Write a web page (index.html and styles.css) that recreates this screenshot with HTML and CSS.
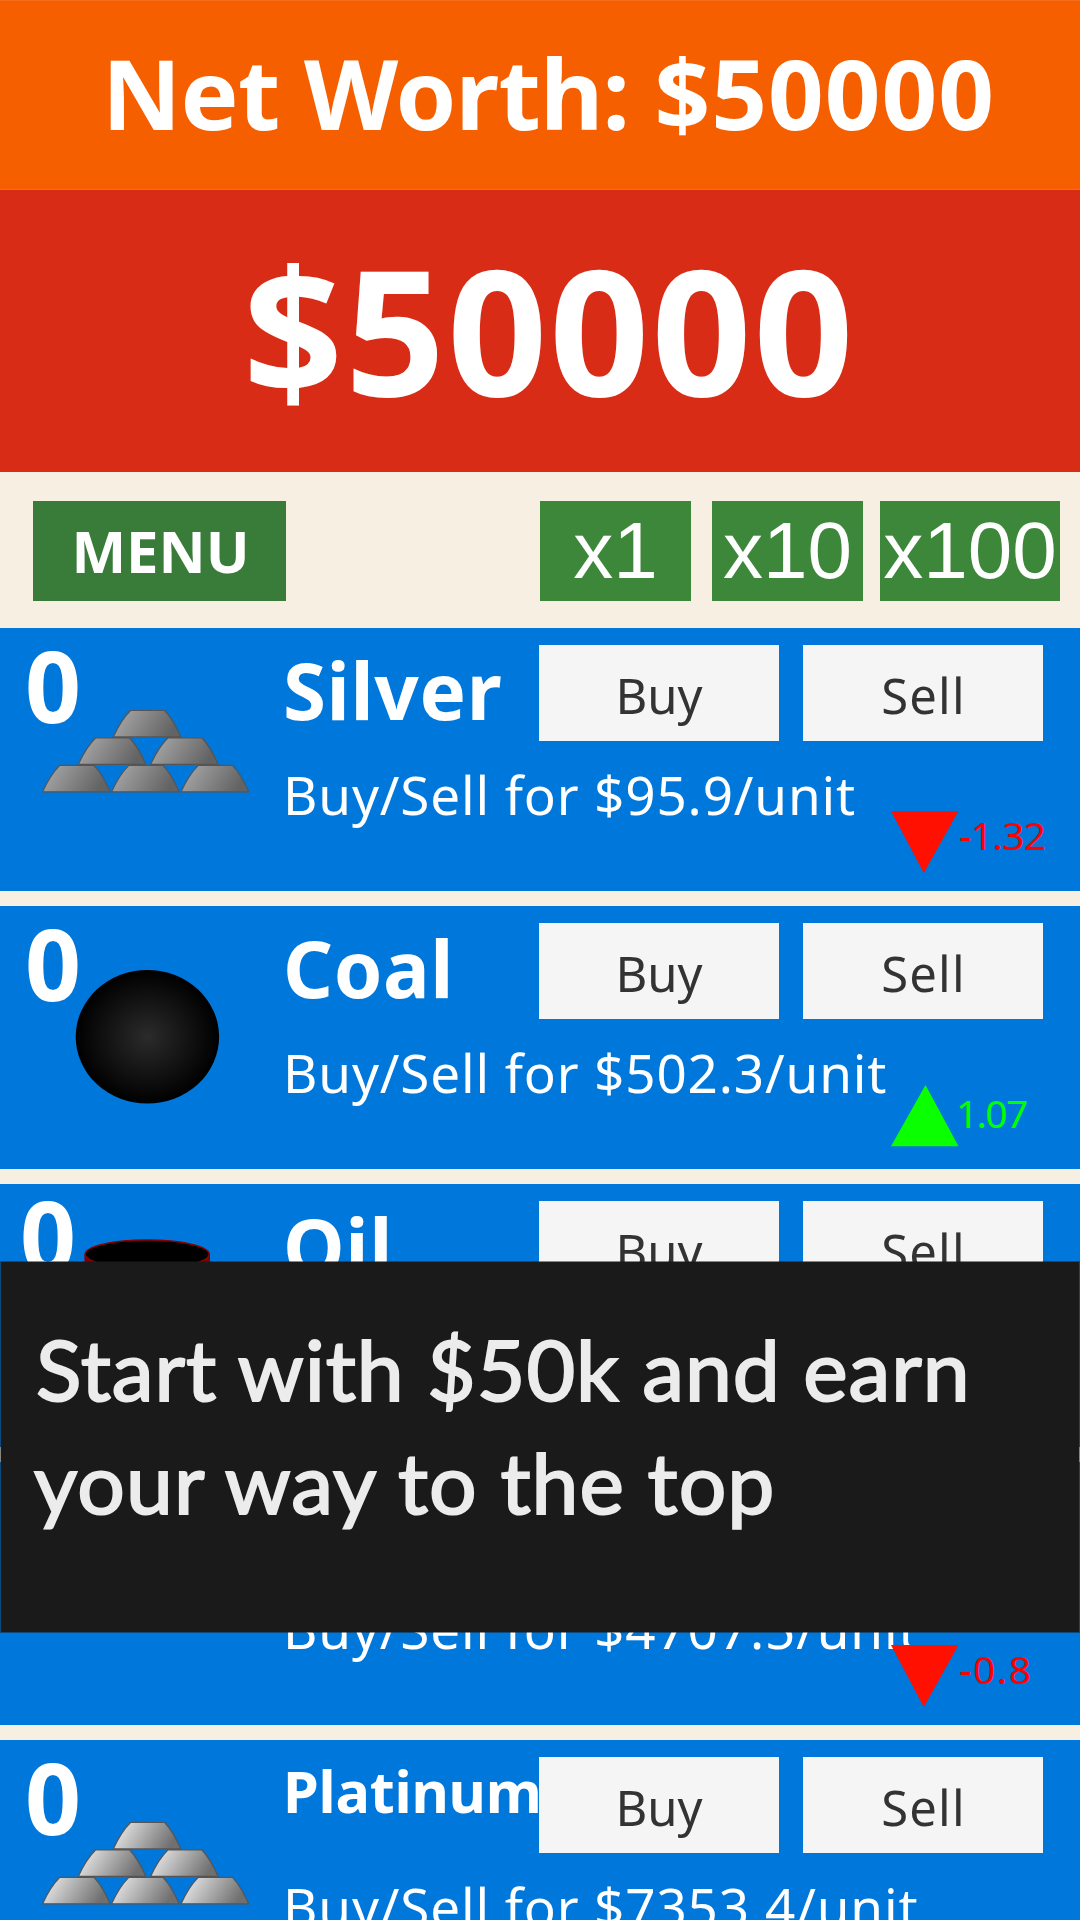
FILE: index.html
```html
<!DOCTYPE html>
<html lang="en">
<head>
<meta charset="utf-8">
<title>Commodity Trader</title>
<link rel="stylesheet" href="styles.css">
</head>
<body>
<svg class="defs" aria-hidden="true">
  <defs>
    <linearGradient id="silver" y2="0.25"><stop offset="0" stop-color="#adadad"/><stop offset="1" stop-color="#636363"/></linearGradient>
    <linearGradient id="platinum" y2="0.25"><stop offset="0" stop-color="#f4f4f4"/><stop offset="1" stop-color="#707070"/></linearGradient>
    <radialGradient id="coal"><stop offset="0" stop-color="#2b2b2b"/><stop offset="1" stop-color="#000"/></radialGradient>
    <path id="ingot" d="M0 26.4Q8 9 17.2 0H51.4Q60 9 67.5 26.4Z"/>
    <g id="ingots" stroke="#555" stroke-width="1.2">
      <use href="#ingot" x="113.3" y="82.5"/>
      <use href="#ingot" x="78.3" y="110"/><use href="#ingot" x="150.6" y="110"/>
      <use href="#ingot" x="42.6" y="137.4"/><use href="#ingot" x="111.6" y="137.4"/><use href="#ingot" x="181.1" y="137.4"/>
    </g>
  </defs>
</svg>
<main class="app">
  <header class="worth"><span class="worth-label">Net Worth:</span> <span class="worth-amount">$50000</span></header>
  <section class="cash">$50000</section>
  <nav class="toolbar">
    <button class="menu">MENU</button>
    <button class="mult">x1</button>
    <button class="mult mult-ten">x10</button>
    <button class="mult mult-hundred">x100</button>
  </nav>
  <section class="market">
    <article class="row">
      <div class="stock">
        <svg class="icon" viewBox="0 0 285 263"><use href="#ingots" fill="url(#silver)"/></svg>
        <span class="count">0</span>
      </div>
      <div class="info">
        <div class="top"><h2 class="name">Silver</h2><button class="trade">Buy</button><button class="trade sell">Sell</button></div>
        <p class="price">Buy/Sell for $95.9/unit</p>
      </div>
      <div class="trend down"><svg class="arrow" viewBox="0 0 68 68"><path d="M0 4H67.5L32.8 66Z"/></svg><span class="delta">-1.32</span></div>
    </article>
    <article class="row">
      <div class="stock">
        <svg class="icon" viewBox="0 0 285 263"><ellipse cx="147.4" cy="130.8" rx="71.7" ry="66.8" fill="url(#coal)"/></svg>
        <span class="count">0</span>
      </div>
      <div class="info">
        <div class="top"><h2 class="name">Coal</h2><button class="trade">Buy</button><button class="trade sell">Sell</button></div>
        <p class="price">Buy/Sell for $502.3/unit</p>
      </div>
      <div class="trend up"><svg class="arrow" viewBox="0 0 68 68"><path d="M0 61.3H67.5L34.5 0Z"/></svg><span class="delta">1.07</span></div>
    </article>
    <article class="row oil">
      <div class="stock">
        <svg class="icon" viewBox="0 0 285 263"><path d="M84.4 70V190A62.8 14.7 0 0 0 210 190V70Z" fill="#7d0000"/><ellipse cx="147.2" cy="70.3" rx="62" ry="14.3" fill="#000" stroke="#8a0000" stroke-width="1.6"/></svg>
        <span class="count">0</span>
      </div>
      <div class="info">
        <div class="top"><h2 class="name">Oil</h2><button class="trade">Buy</button><button class="trade sell">Sell</button></div>
      </div>
    </article>
    <article class="row">
      <div class="stock"></div>
      <div class="info">
        <div class="top"></div>
        <p class="price">Buy/Sell for $4707.5/unit</p>
      </div>
      <div class="trend down"><svg class="arrow" viewBox="0 0 68 68"><path d="M0 4H67.5L32.8 66Z"/></svg><span class="delta delta-short">-0.8</span></div>
    </article>
    <article class="row">
      <div class="stock">
        <svg class="icon" viewBox="0 0 285 263"><use href="#ingots" fill="url(#platinum)"/></svg>
        <span class="count">0</span>
      </div>
      <div class="info">
        <div class="top"><h2 class="name name-long">Platinum</h2><button class="trade">Buy</button><button class="trade sell">Sell</button></div>
        <p class="price">Buy/Sell for $7353.4/unit</p>
      </div>
    </article>
  </section>
  <aside class="caption"><p class="lead">Start with $50k and earn</p><p>your way to the top</p></aside>
</main>
</body>
</html>
```
FILE: styles.css
```css
* { box-sizing: border-box; margin: 0; padding: 0; }
body { background: #f7efe2; font-family: "Noto Sans", sans-serif; color: #fff; }
button { border: 0; font: inherit; color: inherit; white-space: nowrap; }
.defs { position: absolute; width: 0; height: 0; }
.app { position: relative; width: 1080px; height: 1920px; overflow: hidden; }

.worth { height: 190px; background: #f55f00; border-top: 1px solid #f66c18; border-bottom: 1px solid #f66c18; padding: 25px 0 0 102px; font-weight: 700; font-size: 97.5px; line-height: 134px; white-space: nowrap; }
.worth-label { letter-spacing: -0.8px; }
.worth-amount { letter-spacing: 1px; }
.cash { height: 282px; background: #d82c17; padding: 18px 0 0 243px; font-weight: 700; font-size: 175px; line-height: 240px; letter-spacing: 2px; }

.toolbar { height: 156px; display: flex; align-items: flex-start; padding: 29px 20px 0 33px; }
.menu { width: 253px; height: 100px; background: #397b38; font-weight: 700; font-size: 58px; line-height: 98px; padding: 0 0 1px 2px; margin-right: 254px; }
.mult { width: 151px; height: 100px; background: #3d873b; font-family: "Liberation Sans", sans-serif; font-size: 80px; line-height: 98px; }
.mult-ten { margin-left: 21px; }
.mult-hundred { width: 180px; margin-left: 17px; }

.market { display: flex; flex-direction: column; gap: 15px; }
.row { position: relative; flex: none; height: 263px; display: grid; grid-template-columns: 283px 1fr; background: #0077db; }
.stock { position: relative; }
.icon { display: block; width: 285px; height: 263px; }
.count { position: absolute; left: 25px; top: -10px; font-weight: 700; font-size: 98px; line-height: 134px; }
.oil .count { left: 20px; top: -16px; }
.top { height: 113px; padding-top: 17px; display: flex; }
.name { flex: none; width: 256px; font-size: 78px; line-height: 91px; letter-spacing: 0.6px; }
.name-long { font-size: 57.5px; line-height: 69px; letter-spacing: -0.2px; }
.trade { width: 240px; height: 96px; background: #f5f5f5; color: #333; font-size: 49px; line-height: 100px; }
.sell { margin-left: 24px; letter-spacing: 1.2px; padding-left: 1px; }
.price { font-size: 53px; line-height: 72px; padding-top: 18px; letter-spacing: 0.85px; white-space: nowrap; }
.trend { position: absolute; left: 891px; top: 179px; display: flex; color: #f00; }
.arrow { flex: none; width: 68px; height: 68px; }
.delta { font-size: 39px; line-height: 56px; letter-spacing: -0.7px; }
.delta-short { letter-spacing: 1.5px; }
.down path { fill: #ff1000; }
.up { color: #0f0; }
.up path { fill: #0aff00; }
.up .delta { margin-left: -3px; letter-spacing: -1.7px; }

.caption { position: absolute; left: 0; top: 1261px; width: 1080px; height: 372px; background: #1a1a1a; background-clip: padding-box; border: 1px solid rgba(26, 26, 26, 0.5); padding: 50px 0 0 33px; font-family: Lato, sans-serif; font-size: 84px; line-height: 113px; letter-spacing: 1.1px; color: #ececec; -webkit-text-stroke: 2px #ececec; white-space: nowrap; }
.lead { padding-left: 2px; letter-spacing: 0.95px; }
```
